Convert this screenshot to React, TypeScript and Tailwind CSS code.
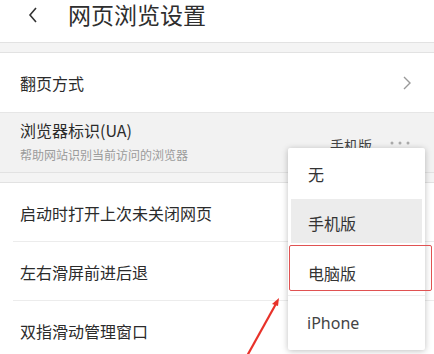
import React from 'react'

const font = { fontFamily: '"Noto Sans CJK SC", "Noto Sans", sans-serif' }

function Row({ label, divider = true }: { label: string; divider?: boolean }) {
  return (
    <div className="relative h-[59px] flex items-center pl-5 bg-white">
      <span className="text-[16px] text-[#2b2b2b]">{label}</span>
      {divider && <div className="absolute left-[13px] right-0 bottom-0 h-px bg-[#ececec]" />}
    </div>
  )
}

export default function App() {
  return (
    <div className="relative w-[434px] h-[354px] overflow-hidden bg-white" style={font}>
      {/* header */}
      <div className="h-[42px] flex items-start bg-white">
        <svg width="14" height="20" viewBox="0 0 14 20" className="ml-[26px] mt-[5px]">
          <path d="M10 3 L4 10 L10 17" fill="none" stroke="#333" strokeWidth="1.6" />
        </svg>
        <span className="ml-[28px] text-[23px] leading-[28px] text-[#2e2e2e]">网页浏览设置</span>
      </div>
      <div className="h-[11px] bg-[#f4f4f4] border-y border-[#e2e2e2]" />

      <div className="h-[59px] flex items-center justify-between pl-5 pr-[22px]">
        <span className="text-[16px] text-[#2b2b2b]">翻页方式</span>
        <svg width="10" height="16" viewBox="0 0 10 16">
          <path d="M2 2 L8 8 L2 14" fill="none" stroke="#999" strokeWidth="1.4" />
        </svg>
      </div>

      <div className="h-[60px] bg-[#f2f2f2] border-t border-[#e6e6e6] flex items-center justify-between pl-5 pr-[24px]">
        <div className="flex flex-col -mt-[3px]">
          <span className="text-[16px] leading-[22px] text-[#2b2b2b]">浏览器标识(UA)</span>
          <span className="text-[12px] leading-[18px] mt-[5px] text-[#9b9b9b]">帮助网站识别当前访问的浏览器</span>
        </div>
        <div className="flex items-center mt-[6px]">
          <span className="text-[14px] text-[#444]">手机版</span>
          <svg width="20" height="4" viewBox="0 0 20 4" className="ml-[18px] -mt-[6px]">
            <circle cx="2" cy="2" r="1.5" fill="#aaa" />
            <circle cx="10" cy="2" r="1.5" fill="#aaa" />
            <circle cx="18" cy="2" r="1.5" fill="#aaa" />
          </svg>
        </div>
      </div>
      <div className="h-[11px] bg-[#f4f4f4] border-y border-[#e2e2e2]" />

      <Row label="启动时打开上次未关闭网页" />
      <Row label="左右滑屏前进后退" />
      <Row label="双指滑动管理窗口" divider={false} />

      {/* dropdown menu */}
      <div className="absolute left-[288px] top-[148px] w-[137px] h-[202px] bg-white shadow-[0_1px_6px_rgba(0,0,0,0.25)] rounded-[2px] flex flex-col">
        <div className="h-[51px] flex items-center pl-[20px] text-[16px] text-[#333]">无</div>
        <div className="h-[44px] mx-[3px] flex items-center pl-[17px] pt-[3px] bg-[#ececec] text-[16px] text-[#333]">手机版</div>
        <div className="h-[53px] flex items-center pl-[20px] pt-[8px] text-[16px] text-[#333] border-b border-[#eeeeee]">电脑版</div>
        <div className="flex-1 flex items-center pl-[19px] text-[16px] text-[#444]" style={{ fontFamily: '"Noto Sans", sans-serif' }}>iPhone</div>
      </div>

      {/* red highlight box */}
      <div className="absolute left-[289px] top-[245px] w-[143px] h-[46px] border-[1.5px] border-[#e05252] rounded-[2px]" />

      {/* red arrow */}
      <svg className="absolute left-0 top-0" width="434" height="354" viewBox="0 0 434 354">
        <line x1="247" y1="356" x2="277" y2="302" stroke="#e8322a" strokeWidth="2.2" />
        <path d="M279 298 L272 304 L278 306 Z" fill="#e8322a" />
      </svg>
    </div>
  )
}
